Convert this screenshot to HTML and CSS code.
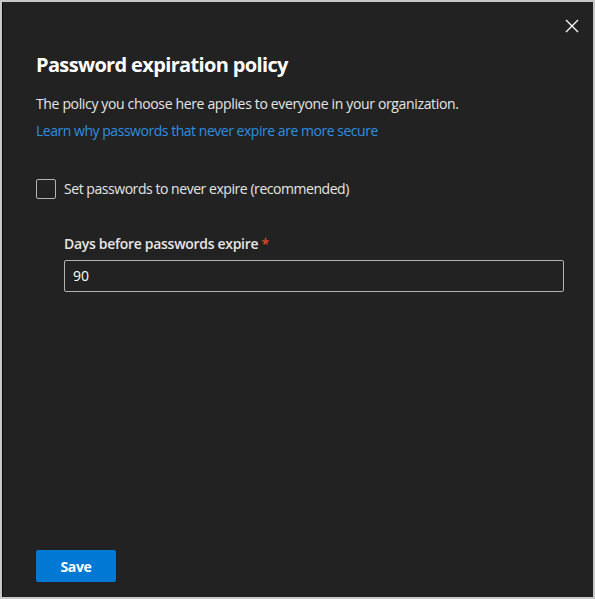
FILE: index.html
```html
<!DOCTYPE html>
<html lang="en">
<head>
<meta charset="utf-8">
<title>Password expiration policy</title>
<link rel="stylesheet" href="styles.css">
</head>
<body>
<div class="frame">
  <div class="panel">
    <button class="close" aria-label="Close">
      <svg width="14" height="14" viewBox="0 0 14 14"><path d="M1 1 L13 13 M13 1 L1 13" stroke="#ffffff" stroke-width="1.3" fill="none"/></svg>
    </button>
    <div class="content">
      <h1 class="title">Password expiration policy</h1>
      <p class="desc">The policy you choose here applies to everyone in your organization.</p>
      <a class="link" href="#">Learn why passwords that never expire are more secure</a>
      <label class="check">
        <span class="box"></span>
        <span class="check-label">Set passwords to never expire (recommended)</span>
      </label>
      <div class="field">
        <div class="field-label">Days before passwords expire <span class="req">*</span></div>
        <div class="input">90</div>
      </div>
    </div>
    <div class="footer">
      <button class="save">Save</button>
    </div>
  </div>
</div>
</body>
</html>
```
FILE: styles.css
```css
html, body {
  margin: 0;
  padding: 0;
  background: #c8c8c8;
}
body {
  width: 595px;
  height: 599px;
  font-family: "Open Sans", "Noto Sans", sans-serif;
}
.frame {
  box-sizing: border-box;
  width: 595px;
  height: 599px;
  padding: 2px 2px 2px 2px;
}
.panel {
  position: relative;
  box-sizing: border-box;
  height: 595px;
  width: 591px;
  background: #222222;
  border-left: 1px solid #0a0a0a;
  display: flex;
  flex-direction: column;
  padding: 0 29px 0 33px;
}
.close {
  position: absolute;
  top: 15px;
  right: 12px;
  width: 18px;
  height: 18px;
  padding: 2px;
  border: 0;
  background: transparent;
  display: flex;
  align-items: center;
  justify-content: center;
}
.content {
  flex: 1;
  display: flex;
  flex-direction: column;
  padding-top: 49px;
}
.title {
  margin: 0;
  font-size: 20px;
  font-weight: 700;
  line-height: 28px;
  color: #ffffff;
  letter-spacing: -0.65px;
}
.desc {
  margin: 15px 0 0 0;
  font-size: 14px;
  line-height: 20px;
  color: #e6e6e6;
  letter-spacing: -0.35px;
}
.link {
  margin-top: 7px;
  font-size: 14px;
  line-height: 20px;
  color: #2d8fe0;
  text-decoration: none;
  letter-spacing: -0.47px;
}
.check {
  display: flex;
  align-items: center;
  gap: 8px;
  margin-top: 38px;
}
.box {
  box-sizing: border-box;
  width: 20px;
  height: 20px;
  border: 1px solid #b3b3b3;
  border-radius: 2px;
}
.check-label {
  font-size: 14px;
  line-height: 20px;
  color: #e6e6e6;
  letter-spacing: -0.45px;
}
.field {
  margin-top: 35px;
  padding-left: 28px;
  display: flex;
  flex-direction: column;
}
.field-label {
  font-size: 14px;
  font-weight: 600;
  line-height: 20px;
  color: #e6e6e6;
  letter-spacing: -0.3px;
}
.req {
  color: #e34a2a;
}
.input {
  box-sizing: border-box;
  margin-top: 6px;
  height: 32px;
  border: 1px solid #b3b3b3;
  border-radius: 2px;
  padding: 0 8px;
  font-size: 14px;
  line-height: 30px;
  color: #ffffff;
}
.footer {
  padding-bottom: 15px;
}
.save {
  width: 80px;
  height: 32px;
  border: 0;
  border-radius: 2px;
  background: #0078d4;
  color: #ffffff;
  font-family: "Open Sans", "Noto Sans", sans-serif;
  font-size: 14px;
  font-weight: 700;
  letter-spacing: -0.3px;
  padding: 0;
}
```
